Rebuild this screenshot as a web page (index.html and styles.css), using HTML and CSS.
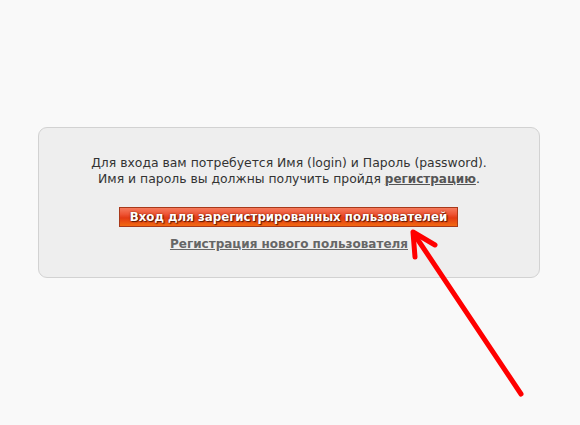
FILE: index.html
```html
<!DOCTYPE html>
<html lang="ru">
<head>
<meta charset="utf-8">
<link rel="stylesheet" href="styles.css">
</head>
<body>
<div class="page">
  <div class="box">
    <p class="info">Для входа вам потребуется Имя (login) и Пароль (password).<br>Имя и пароль вы должны получить пройдя <a href="#" class="inline-link">регистрацию</a>.</p>
    <div class="actions">
      <a href="#" class="login-btn">Вход для зарегистрированных пользователей</a>
      <a href="#" class="reg-link">Регистрация нового пользователя</a>
    </div>
  </div>
</div>
<svg class="arrow" width="580" height="425" viewBox="0 0 580 425">
  <g stroke="#f00" stroke-width="5" stroke-linecap="round" stroke-linejoin="round" fill="none">
    <line x1="521" y1="394" x2="414" y2="234"/>
    <polyline points="435,245 413,232 415,257"/>
  </g>
</svg>
</body>
</html>
```
FILE: styles.css
```css
html, body {
  margin: 0;
  padding: 0;
  background: #f9f9f9;
}
body {
  font-family: "DejaVu Sans", Verdana, sans-serif;
  font-size: 12px;
  color: #333;
  width: 580px;
  height: 425px;
  overflow: hidden;
}
.page {
  padding: 127px 40px 0 38px;
}
.box {
  box-sizing: border-box;
  width: 502px;
  height: 151px;
  background: #eeeeee;
  border: 1px solid #d2d2d2;
  border-radius: 9px;
  padding-top: 27px;
  text-align: center;
}
.info {
  margin: 0;
  font-size: 12.4px;
  line-height: 16px;
  color: #333;
}
.inline-link {
  color: #555;
  font-size: 12px;
  font-weight: bold;
  text-decoration: underline;
}
.actions {
  margin-top: 20px;
  display: flex;
  flex-direction: column;
  align-items: center;
}
.login-btn {
  box-sizing: border-box;
  display: block;
  width: 339px;
  height: 20px;
  margin-left: -1px;
  line-height: 18px;
  border: 1px solid #a8391a;
  background: linear-gradient(to bottom, #f57a5c 0%, #ee5434 35%, #e33a14 55%, #f26a12 100%);
  color: #fff;
  font-size: 11.8px;
  font-weight: bold;
  text-decoration: none;
  text-shadow: 1px 1px 1px #5a1500, 0 0 2px #7a2000;
}
.reg-link {
  margin-top: 9px;
  color: #666;
  font-weight: bold;
  text-decoration: underline;
  line-height: 16px;
}
.arrow {
  position: absolute;
  left: 0;
  top: 0;
  pointer-events: none;
}
```
